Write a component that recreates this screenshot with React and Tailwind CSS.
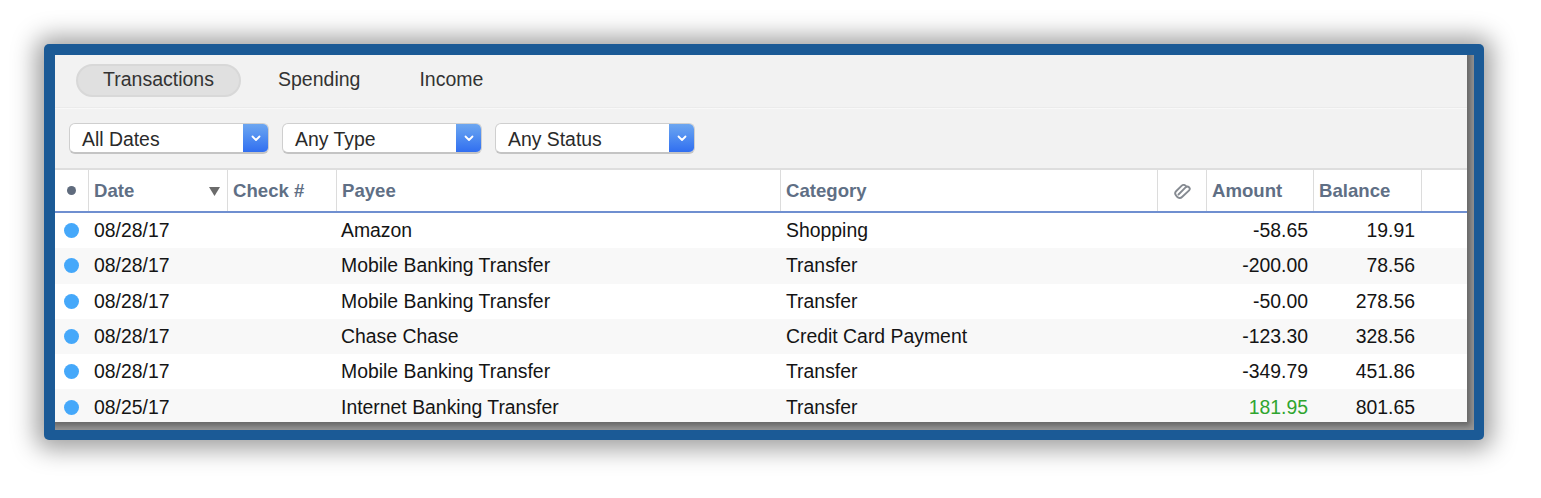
import React from 'react';

const FONT = "font-['Liberation_Sans',Arial,sans-serif]";
const COLS = 'grid grid-cols-[33px_1px_138px_1px_108px_1px_443px_1px_376px_1px_48px_1px_106px_1px_107px_1px_1fr]';

const rows = [
  { date: '08/28/17', payee: 'Amazon', category: 'Shopping', amount: '-58.65', balance: '19.91' },
  { date: '08/28/17', payee: 'Mobile Banking Transfer', category: 'Transfer', amount: '-200.00', balance: '78.56' },
  { date: '08/28/17', payee: 'Mobile Banking Transfer', category: 'Transfer', amount: '-50.00', balance: '278.56' },
  { date: '08/28/17', payee: 'Chase Chase', category: 'Credit Card Payment', amount: '-123.30', balance: '328.56' },
  { date: '08/28/17', payee: 'Mobile Banking Transfer', category: 'Transfer', amount: '-349.79', balance: '451.86' },
  { date: '08/25/17', payee: 'Internet Banking Transfer', category: 'Transfer', amount: '181.95', balance: '801.65', positive: true },
];

function Select({ label }) {
  return (
    <div className="flex h-[31px] w-[200px] rounded-[6px] bg-white border border-[#cfcfcf] border-b-2 border-b-[#c4c4c4] overflow-hidden">
      <div className="flex-1 pl-[12px] text-[19.4px] leading-[31px] text-[#2a2a2a]">{label}</div>
      <div className="w-[26px] -my-px -mr-px flex items-center justify-center bg-gradient-to-b from-[#6fa8f0] to-[#2f6cf0]">
        <svg width="10" height="7" viewBox="0 0 10 7" fill="none" stroke="#fff" strokeWidth="1.8" strokeLinecap="round" strokeLinejoin="round">
          <path d="M1.5 1.5 5 5l3.5-3.5" />
        </svg>
      </div>
    </div>
  );
}

const Sep = () => <div className="bg-[#dcdcdc]" />;

function Head({ children }) {
  return <div className="pl-[5px] pt-[1px] flex items-center text-[18.6px] font-bold text-[#5f6f85]">{children}</div>;
}

export default function App() {
  return (
    <div className={`${FONT} w-[1541px] h-[498px] bg-white pt-[44px] pl-[44px] overflow-hidden`}>
      <div className="w-[1440px] h-[396px] rounded-[5px] bg-[#1b5a96] pt-[11px] pl-[11px] pr-[10px] pb-[10px] shadow-[0_1px_24px_8px_rgba(0,0,0,0.38)]">
        <div className="h-full overflow-hidden bg-[#989898] pr-[7px] pb-[8px]">
          <div className="h-full bg-white flex flex-col overflow-hidden shadow-[0_0_6px_4px_#666]">
            {/* tabs */}
            <div className="h-[52px] shrink-0 bg-[#f2f2f2] flex items-center pl-[21px] pb-[2px] text-[19.5px] text-[#333]">
              <div className="w-[165px] h-[33px] rounded-full bg-[#e0e0e0] border-2 border-[#d8d8d8] flex items-center justify-center">Transactions</div>
              <div className="ml-[37px]">Spending</div>
              <div className="ml-[59px]">Income</div>
            </div>
            <div className="h-[2px] shrink-0 bg-gradient-to-b from-[#e4e4e4] to-white" />
            {/* filters */}
            <div className="h-[61px] shrink-0 bg-[#f2f2f2] flex items-center gap-[13px] pl-[14px] border-b-2 border-b-[#dedede]">
              <Select label="All Dates" />
              <Select label="Any Type" />
              <Select label="Any Status" />
            </div>
            {/* column headers */}
            <div className={`${COLS} h-[43px] shrink-0 border-b-2 border-b-[#6f8fd0] bg-white`}>
              <div className="flex items-center justify-center">
                <div className="w-[9px] h-[9px] rounded-full bg-[#5f6b7d]" />
              </div>
              <Sep />
              <div className="pl-[5px] pr-[7px] pt-[1px] flex items-center justify-between text-[18.6px] font-bold text-[#5f6f85]">
                Date
                <svg width="11" height="9" viewBox="0 0 11 9"><path d="M0 0h11L5.5 9z" fill="#6b6b6b" /></svg>
              </div>
              <Sep />
              <Head>Check #</Head>
              <Sep />
              <Head>Payee</Head>
              <Sep />
              <Head>Category</Head>
              <Sep />
              <div className="flex items-center justify-center pt-[1px]">
                <svg width="19" height="15" viewBox="0 0 19 15" fill="none" stroke="#858a91" strokeWidth="1.9" strokeLinecap="round">
                  <path d="M5.5 10.5 12.8 3.2a2.3 2.3 0 0 1 3.3 3.2L9 13a3.3 3.3 0 0 1-4.8-.2L3.2 11.6a3.3 3.3 0 0 1 .1-4.6L8.5 1.8a3 3 0 0 1 4.3 0" />
                </svg>
              </div>
              <Sep />
              <Head>Amount</Head>
              <Sep />
              <Head>Balance</Head>
              <Sep />
              <div />
            </div>
            {/* transaction rows */}
            <div className="flex-1 flex flex-col">
              {rows.map((r, i) => (
                <div key={i} className={`${COLS} h-[35.3px] shrink-0 items-center text-[19.4px] text-[#141414] ${i % 2 ? 'bg-[#f8f8f8]' : 'bg-white'}`}>
                  <div className="flex justify-center">
                    <div className="w-[15px] h-[15px] rounded-full bg-[#45a8fa] -ml-[1px]" />
                  </div>
                  <div />
                  <div className="pl-[5px]">{r.date}</div>
                  <div />
                  <div />
                  <div />
                  <div className="pl-[4px]">{r.payee}</div>
                  <div />
                  <div className="pl-[5px]">{r.category}</div>
                  <div />
                  <div />
                  <div />
                  <div className={`text-right pr-[5px] ${r.positive ? 'text-[#2fa52f]' : ''}`}>{r.amount}</div>
                  <div />
                  <div className="text-right pr-[6px]">{r.balance}</div>
                  <div />
                  <div />
                </div>
              ))}
            </div>
          </div>
        </div>
      </div>
    </div>
  );
}
